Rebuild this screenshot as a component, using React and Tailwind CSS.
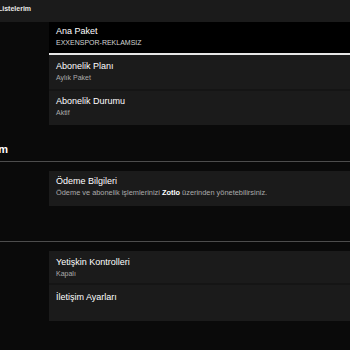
import React from "react";

function Card({ title, sub, h, pt, dark, subSize }) {
  return (
    <div className={`${h} ${pt} ${dark ? "bg-black" : "bg-[#1b1b1b]"} pl-[7px] flex flex-col`}>
      <div className="text-[9px] leading-[9px] text-white whitespace-nowrap">{title}</div>
      {sub ? (
        <div className={`mt-[3px] ${subSize || "text-[7px]"} leading-[7px] whitespace-nowrap ${dark ? "text-[#d4d4d4]" : "text-[#ababab]"}`}>{sub}</div>
      ) : null}
    </div>
  );
}

export default function App() {
  return (
    <div className="w-[350px] h-[350px] overflow-hidden bg-[#0a0a0a] font-['Liberation_Sans',Arial,sans-serif]">
      <div className="h-[22px] bg-[#1b1b1b] pt-[5px]">
        <div className="-ml-[2px] text-[7px] leading-[7px] font-bold text-[#e8e8e8] whitespace-nowrap">Listelerim</div>
      </div>

      <div className="flex">
        <div className="w-[49px] shrink-0" />
        <div className="flex-1 flex flex-col">
          <Card title="Ana Paket" sub="EXXENSPOR-REKLAMSIZ" h="h-[31px]" pt="pt-[5px]" dark />
          <div className="h-[2px] bg-[#e6e6e6]" />
          <Card title="Abonelik Planı" sub="Aylık Paket" h="h-[34px]" pt="pt-[7px]" />
          <div className="h-[2px] bg-[#151515]" />
          <Card title="Abonelik Durumu" sub="Aktif" h="h-[34px]" pt="pt-[6px]" />
        </div>
      </div>

      <div className="mt-[19px] flex justify-end w-[8px]">
        <div className="text-[11px] leading-[11px] font-bold text-white whitespace-nowrap">Hesabım</div>
      </div>
      <div className="mt-[6px] h-px bg-[#4d4d4d]" />

      <div className="flex mt-[9px]">
        <div className="w-[49px] shrink-0" />
        <div className="flex-1 flex flex-col">
          <Card
            title="Ödeme Bilgileri"
            sub={
              <>
                Ödeme ve abonelik işlemlerinizi <span className="font-bold text-[#ffffff]">Zotlo</span> üzerinden yönetebilirsiniz.
              </>
            }
            subSize="text-[7.4px]"
            h="h-[35px]"
            pt="pt-[6px]"
          />
        </div>
      </div>

      <div className="mt-[35px] h-px bg-[#4d4d4d]" />

      <div className="flex mt-[9px]">
        <div className="w-[49px] shrink-0" />
        <div className="flex-1 flex flex-col">
          <Card title="Yetişkin Kontrolleri" sub="Kapalı" h="h-[32px]" pt="pt-[7px]" />
          <div className="h-[2px] bg-[#151515]" />
          <Card title="İletişim Ayarları" h="h-[36px]" pt="pt-[8px]" />
        </div>
      </div>
    </div>
  );
}
